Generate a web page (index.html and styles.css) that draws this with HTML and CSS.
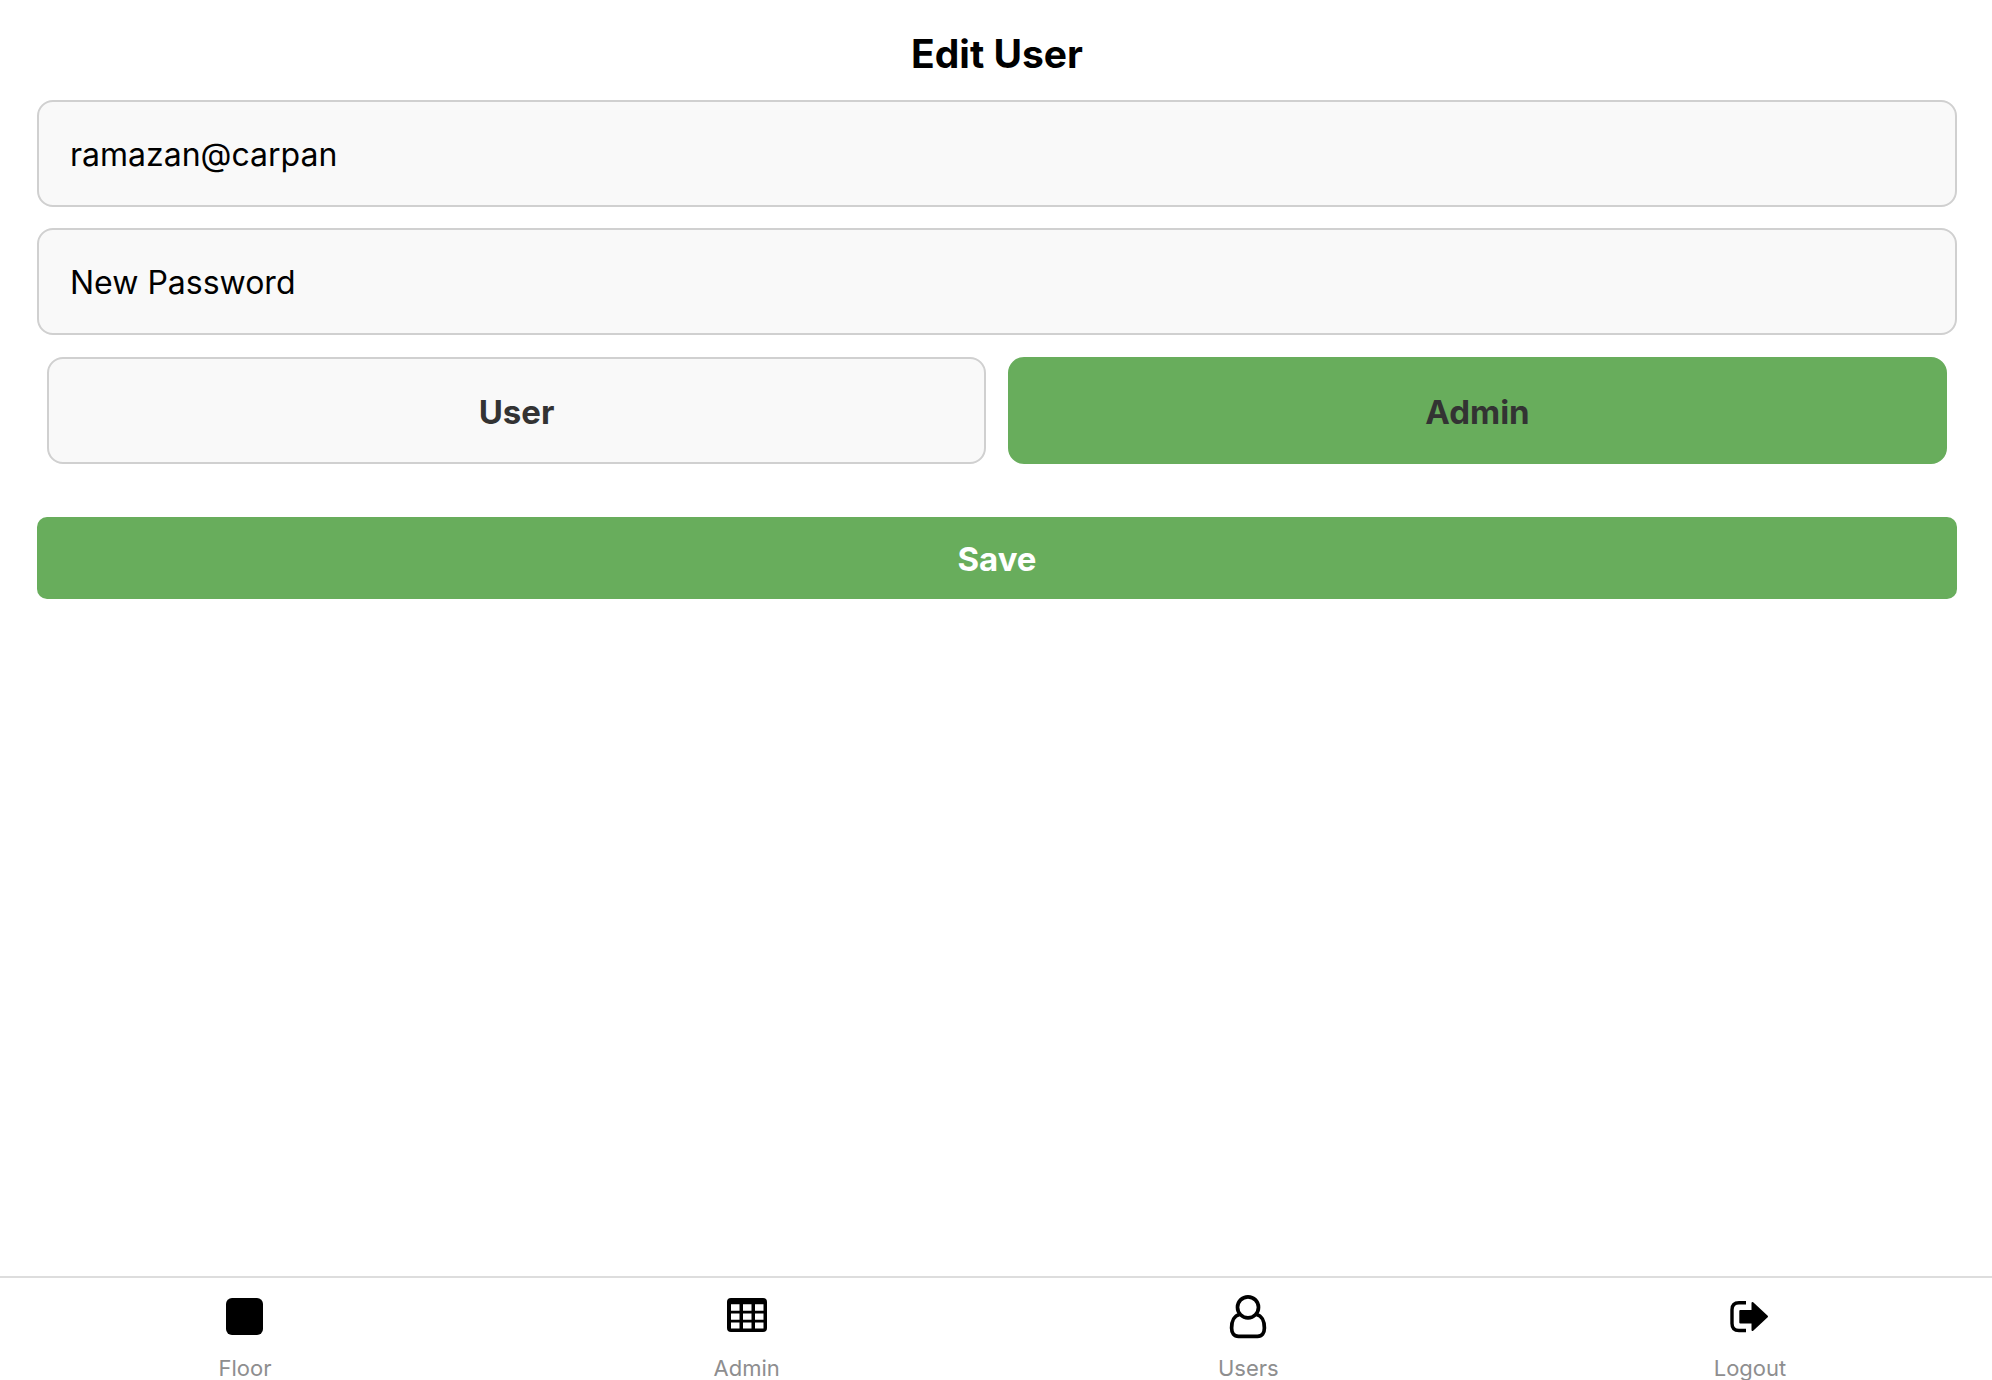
FILE: index.html
```html
<!DOCTYPE html>
<html lang="en">
<head>
<meta charset="utf-8">
<meta name="viewport" content="width=device-width, initial-scale=1">
<title>Edit User</title>
<link rel="stylesheet" href="styles.css">
</head>
<body>
<main class="screen">
  <h1 class="title">Edit User</h1>
  <form class="form">
    <input class="field" type="text" aria-label="Username" value="ramazan@carpan">
    <input class="field" type="password" aria-label="New Password" placeholder="New Password">
    <div class="roles" role="group" aria-label="Role">
      <button class="role" type="button" aria-pressed="false">User</button>
      <button class="role role-selected" type="button" aria-pressed="true">Admin</button>
    </div>
    <button class="save" type="submit">Save</button>
  </form>
</main>
<nav class="tabs" aria-label="Main">
  <a class="tab" href="#floor">
    <svg class="icon" viewBox="0 0 48 48" aria-hidden="true"><rect x="5" y="6" width="37" height="37" rx="6"/></svg>
    <span>Floor</span>
  </a>
  <a class="tab" href="#admin">
    <svg class="icon" viewBox="0 0 48 48" aria-hidden="true"><path fill-rule="evenodd" d="M8 6H40Q44 6 44 10V36Q44 40 40 40H8Q4 40 4 36V10Q4 6 8 6ZM8 12.300V18.700H16.500V12.300ZM20 12.300V18.700H28.500V12.300ZM32 12.300V18.700H40.500V12.300ZM8 21.500V27.700H16.500V21.500ZM20 21.500V27.700H28.500V21.500ZM32 21.500V27.700H40.500V21.500ZM8 30.500V36.500H16.500V30.500ZM20 30.500V36.500H28.500V30.500ZM32 30.500V36.500H40.500V30.500Z"/></svg>
    <span>Admin</span>
  </a>
  <a class="tab" href="#users">
    <svg class="icon" viewBox="0 0 48 48" aria-hidden="true"><g fill="none" stroke="#000" stroke-width="3.700"><circle cx="24" cy="15.300" r="10.500"/><path d="M15.500 22.500C10.500 23.500 7.600 29 7.600 36C7.600 41 10 44.300 14.500 44.300H33.500C38 44.300 40.400 41 40.400 36C40.400 29 37.500 23.500 32.500 22.500"/></g></svg>
    <span>Users</span>
  </a>
  <a class="tab" href="#logout">
    <svg class="icon" viewBox="0 0 48 48" aria-hidden="true"><path fill="none" stroke="#000" stroke-width="3.400" d="M20 10.700H13Q6 10.700 6 17.700V31.500Q6 38.500 13 38.500H20"/><path stroke="#000" stroke-width="2" stroke-linejoin="round" d="M14.300 19H26.500V11L41 24.600L26.500 38V30.500H14.300Z"/></svg>
    <span>Logout</span>
  </a>
</nav>
</body>
</html>
```
FILE: styles.css
```css
* {
  box-sizing: border-box;
}

body {
  margin: 0;
  min-height: 100vh;
  display: flex;
  flex-direction: column;
  background: #fff;
  color: #000;
  font-family: Inter, "Liberation Sans", sans-serif;
}

.screen {
  flex: 1;
  padding: 30px 35px 0 37px;
}

.title {
  margin: 0 0 22px;
  font-size: 39px;
  line-height: 48px;
  font-weight: 700;
  text-align: center;
}

.form {
  display: flex;
  flex-direction: column;
  gap: 21px;
}

.field,
.role {
  height: 107px;
  border: 2px solid #d0d0d0;
  border-radius: 16px;
  background: #f9f9f9;
  font-family: inherit;
}

.field {
  width: 100%;
  padding: 2px 31px 0;
  color: #000;
  font-size: 32px;
}

.field::placeholder {
  color: #000;
  opacity: 1;
}

.roles {
  display: flex;
  gap: 22px;
  margin-top: 1px;
  padding: 0 10px;
}

.role,
.save {
  padding: 2px 0 0;
  font-size: 33px;
  font-weight: 700;
}

.role {
  flex: 1;
  color: #333;
}

.role-selected {
  border-color: #68ad5c;
  background: #68ad5c;
}

.save {
  height: 82px;
  margin-top: 32px;
  border: 0;
  border-radius: 10px;
  background: #68ad5c;
  color: #fff;
  font-family: inherit;
}

.tabs {
  display: flex;
  justify-content: space-between;
  padding: 14px 200px 0 203px;
  border-top: 2px solid #ddd;
}

.tab {
  display: flex;
  flex-direction: column;
  align-items: center;
  gap: 16px;
  width: 84px;
  color: #8e8e8f;
  font-size: 22px;
  line-height: 24px;
  text-decoration: none;
}

.icon {
  width: 48px;
  height: 48px;
}
```
